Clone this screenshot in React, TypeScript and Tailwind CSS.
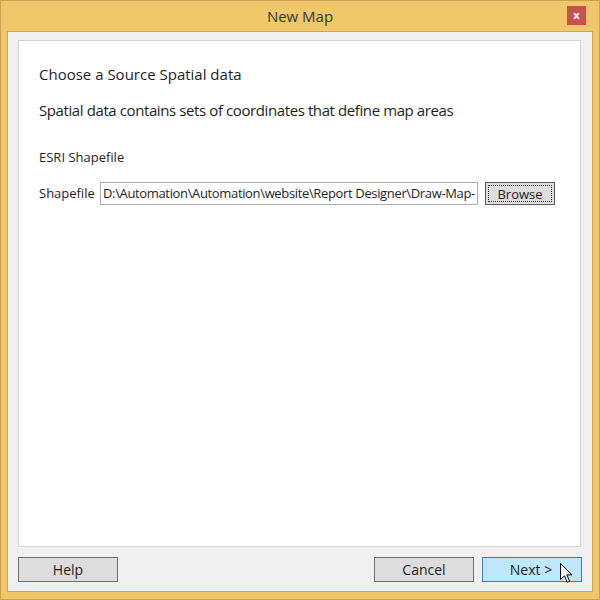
import React from "react";

const font = { fontFamily: '"Open Sans", "Noto Sans", sans-serif' };

function Cursor() {
  return (
    <svg width="13" height="21" viewBox="0 0 13 21" className="absolute left-[77px] top-[5px]">
      <path
        d="M0.5 0.5 L0.5 16.5 L4.5 12.8 L7.3 19.2 L9.6 18.2 L6.9 11.9 L12 11.9 Z"
        fill="#fff"
        stroke="#000"
        strokeWidth="1"
        strokeLinejoin="miter"
      />
    </svg>
  );
}

export default function App() {
  return (
    <div
      className="w-[600px] h-[600px] bg-[#f0c76b] border border-[#c9a24c] flex flex-col px-[6px] pb-[7px]"
      style={font}
    >
      <div className="h-[30px] relative flex items-center justify-center shrink-0">
        <span className="text-[15px] text-[#2f3a3a] leading-none">New Map</span>
        <div className="absolute right-[7px] top-[5px] w-[19px] h-[19px] bg-[#c75050] flex items-center justify-center">
          <span className="text-white text-[11px] font-bold leading-none mt-[-2px]">x</span>
        </div>
      </div>
      <div className="flex-1 border border-[#d0a448] bg-[#f0f0f0] flex flex-col pl-[10px] pr-[10px] pt-[8px] pb-[9px]">
        <div className="h-[507px] mr-[1px] bg-white border border-[#d5d5d5] flex flex-col pl-[20px] text-[#1e1e1e]">
          <div className="mt-[24px] text-[15px] leading-[18px]">Choose a Source Spatial data</div>
          <div className="mt-[18px] text-[15px] leading-[18px] tracking-[-0.4px]">
            Spatial data contains sets of coordinates that define map areas
          </div>
          <div className="mt-[29px] text-[13px] leading-[18px]">ESRI Shapefile</div>
          <div className="mt-[16px] flex items-center h-[23px]">
            <span className="text-[13px] w-[61px]">Shapefile</span>
            <div className="w-[378px] h-[23px] border border-[#abadb3] bg-white flex items-center pl-[2px] overflow-hidden whitespace-nowrap">
              <span className="text-[13px] tracking-[-0.35px] text-[#1e1e1e]">
                D:\Automation\Automation\website\Report Designer\Draw-Map-
              </span>
            </div>
            <div className="ml-[7px] w-[70px] h-[23px] border border-[#5a5a5a] bg-[#dddddd] p-[2px]">
              <div className="w-full h-full border border-dotted border-[#333] flex items-center justify-center">
                <span className="text-[13px] text-[#1e1e1e] leading-[15px] mt-[2px]">Browse</span>
              </div>
            </div>
          </div>
        </div>
        <div className="mt-[10px] h-[25px] flex items-center">
          <div className="w-[100px] h-[25px] border border-[#707070] bg-[#dddddd] flex items-center justify-center text-[14px] text-[#1e1e1e]">
            Help
          </div>
          <div className="flex-1" />
          <div className="w-[100px] h-[25px] border border-[#707070] bg-[#dddddd] flex items-center justify-center text-[14px] text-[#1e1e1e]">
            Cancel
          </div>
          <div className="ml-[8px] w-[100px] h-[25px] border border-[#3c7fb1] bg-[#bee6fd] flex items-center justify-center text-[14px] text-[#1e1e1e] relative">
            <span className="mr-[2px]">Next &gt;</span>
            <Cursor />
          </div>
        </div>
      </div>
    </div>
  );
}
